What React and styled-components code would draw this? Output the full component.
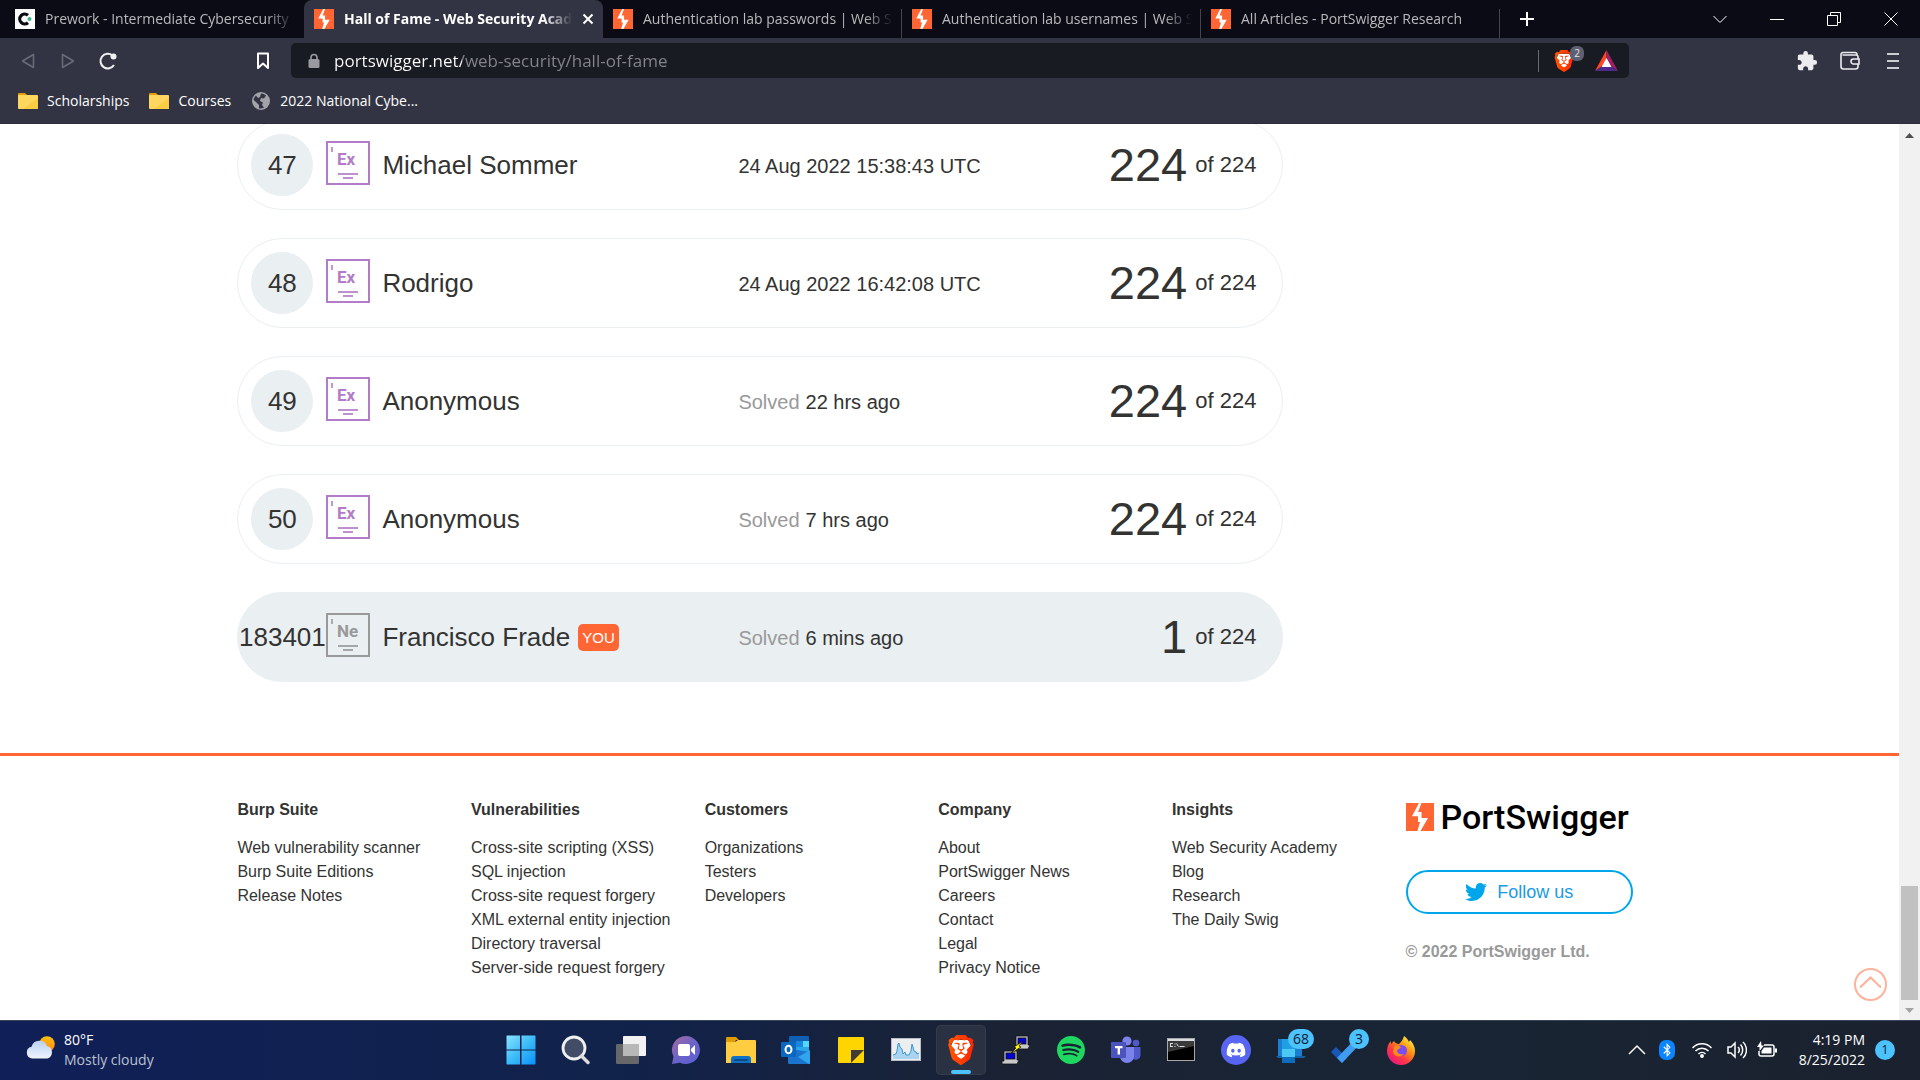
import React from "react";
import styled, { createGlobalStyle, css } from "styled-components";
import { SiBrave, SiSpotify, SiDiscord } from "react-icons/si";
import { FaTwitter, FaBluetoothB } from "react-icons/fa";
import { MdExtension } from "react-icons/md";

const uiFont = `"Open Sans", "Noto Sans", sans-serif`;
const pageFont = `"Liberation Sans", Arial, sans-serif`;

const GlobalStyle = createGlobalStyle`
  *, *::before, *::after { box-sizing: border-box; }
  html, body, #root { height: 100%; }
  body { margin: 0; background: #fff; overflow: hidden; }
  button { border: 0; padding: 0; background: none; color: inherit; font: inherit; }
  svg { display: block; flex: none; }
`;

const Desktop = styled.div`
  display: flex;
  flex-direction: column;
  height: 100%;
`;

/* ---------- browser frame ---------- */

const Chrome = styled.header`
  font: 14px/20px ${uiFont};
  color: #fff;
  background: #323443;
`;

const TabStrip = styled.div`
  display: flex;
  height: 38px;
  padding-left: 5px;
  background: #0a0b15;
`;

const Tabs = styled.div`
  display: flex;
  min-width: 0;
`;

const Tab = styled.div`
  display: flex;
  align-items: center;
  gap: 10px;
  width: 299px;
  min-width: 0;
  padding: 0 9px 0 10px;
  color: #b9b9bc;
  ${(p) =>
    p.$active
      ? css`
          color: #fff;
          font-weight: 700;
          background: #323443;
          border-radius: 8px 8px 0 0;
        `
      : p.$divider &&
        css`
          background: linear-gradient(#45454d, #45454d) right bottom / 1px 29px no-repeat;
        `}
`;

const TabTitle = styled.span`
  flex: 1;
  min-width: 0;
  overflow: hidden;
  white-space: nowrap;
  mask-image: linear-gradient(to right, #000 calc(100% - 28px), transparent);
`;

const IconButton = styled.button`
  display: flex;
  align-items: center;
  justify-content: center;
  width: ${(p) => p.$width || 20}px;
  height: ${(p) => p.$height || 20}px;
  color: ${(p) => p.$color || "#fff"};
`;

const WindowControls = styled.div`
  display: flex;
  margin-left: auto;
  padding-right: 1px;
`;

const Toolbar = styled.div`
  display: flex;
  align-items: center;
  height: 45px;
  padding: 0 17px 0 8px;
`;

const NavButtons = styled.div`
  display: flex;
  align-items: center;
  width: 236px;
`;

const AddressBar = styled.form`
  display: flex;
  align-items: center;
  flex: 0 1 1338px;
  min-width: 0;
  height: 35px;
  margin: 0 auto 0 10px;
  padding: 0 11px 0 17px;
  gap: 14px;
  background: #191b22;
  border-radius: 5px;
`;

const AddressInput = styled.input`
  flex: 1;
  min-width: 0;
  height: 28px;
  padding: 0;
  border: 0;
  outline: 0;
  font: 17px/28px ${uiFont};
  color: transparent;
  background: linear-gradient(to right, #fff 128px, #85868b 128px);
  background-clip: text;
`;

const Extensions = styled.div`
  display: flex;
  align-items: center;
  height: 22px;
  padding-left: 14px;
  gap: 22px;
  border-left: 1px solid #6a6b72;
`;

const ShieldButton = styled.button`
  position: relative;
  width: 20px;
  height: 22px;
`;

const ShieldCount = styled.span`
  position: absolute;
  top: -4px;
  right: -11px;
  width: 14px;
  border-radius: 6px;
  background: #5e6071;
  color: #e4e4e8;
  font-size: 10px;
  line-height: 15px;
  text-align: center;
`;

const ToolbarActions = styled.div`
  display: flex;
  align-items: center;
  gap: 23px;
`;

const Bookmarks = styled.nav`
  display: flex;
  align-items: center;
  gap: 20px;
  height: 41px;
  padding: 0 18px 4px;
  border-bottom: 1px solid #2a2b38;
`;

const Bookmark = styled.a`
  display: flex;
  align-items: center;
  gap: 9px;
  color: #fff;
  text-decoration: none;
`;

/* ---------- web page ---------- */

const Viewport = styled.div`
  display: flex;
  flex: 1;
  min-height: 0;
  position: relative;
  background: #fff;
`;

const Page = styled.div`
  display: flex;
  flex: 1;
  flex-direction: column;
  justify-content: flex-end;
  min-width: 0;
  overflow: hidden;
  font: 16px/24px ${pageFont};
  color: #333332;
`;

const Main = styled.main`
  padding: 0 14% 71px 12.5%;
`;

const Board = styled.table`
  display: block;
  max-width: 1046px;
`;

const BoardBody = styled.tbody`
  display: flex;
  flex-direction: column;
  gap: 28px;
`;

const Row = styled.tr`
  display: grid;
  grid-template-columns: 75px 56px 356px 1fr auto;
  align-items: center;
  height: 90px;
  padding: 0 26px 0 13px;
  border: 1px solid #eaeff1;
  border-radius: 45px;
  background: ${(p) => (p.$own ? "#eaeff2" : "#fff")};
`;

const Cell = styled.td`
  display: flex;
  align-items: center;
  padding: 0;
  white-space: nowrap;
`;

const BadgeCell = styled(Cell)`
  padding-bottom: 5px;
`;

const Rank = styled.span`
  display: flex;
  align-items: center;
  justify-content: center;
  width: 62px;
  height: 62px;
  border-radius: 50%;
  background: #eaeff2;
  font-size: 26px;
`;

const NameCell = styled(Cell)`
  gap: 8px;
  font-size: 26px;
`;

const YouTag = styled.span`
  padding: 1px 4px 0;
  border-radius: 5px;
  background: #ff6633;
  color: #fff;
  font-size: 15px;
  line-height: 26px;
`;

const TimeCell = styled(Cell)`
  gap: 6px;
  padding-top: 2px;
  font-size: 20px;
`;

const Muted = styled.span`
  color: #999;
`;

const ScoreCell = styled(Cell)`
  gap: 8px;
  font-size: 22px;
`;

const Score = styled.span`
  font-size: 47px;
  line-height: 48px;
`;

const Footer = styled.footer`
  display: grid;
  grid-template-columns: repeat(6, minmax(0, 1fr));
  gap: 6px;
  padding: 42px 14% 40px 12.5%;
  border-top: 3px solid #ff6633;
`;

const FooterHeading = styled.h2`
  margin: 0 0 14px;
  font-size: 16px;
  line-height: 24px;
`;

const FooterLinks = styled.ul`
  margin: 0;
  padding: 0;
  list-style: none;
  white-space: nowrap;
`;

const FooterLink = styled.a`
  color: #333332;
  text-decoration: none;
`;

const Company = styled.div`
  display: flex;
  flex-direction: column;
  padding-top: 5px;
`;

const Brand = styled.a`
  display: flex;
  align-items: center;
  gap: 7px;
  height: 28px;
  color: #000;
  font: 500 34px/28px Roboto, sans-serif;
  text-decoration: none;
`;

const FollowButton = styled.a`
  display: flex;
  align-items: center;
  justify-content: center;
  gap: 10px;
  height: 44px;
  margin: 39px 0 26px;
  border: 2px solid #00a6eb;
  border-radius: 22px;
  color: #1b9ae8;
  font-size: 18px;
  text-decoration: none;
`;

const Copyright = styled.small`
  color: #999;
  font-size: 16px;
  font-weight: 700;
`;

const ToTop = styled.button`
  position: absolute;
  right: 33px;
  bottom: 19px;
  width: 33px;
  height: 33px;
`;

const Scrollbar = styled.div`
  display: flex;
  flex-direction: column;
  align-items: center;
  width: 21px;
  padding: 9px 0 7px;
  background: #f1f1f1;
`;

const ScrollThumb = styled.div`
  width: 17px;
  height: 114px;
  margin: auto 0 8px;
  background: #c1c1c1;
`;

/* ---------- taskbar ---------- */

const Taskbar = styled.footer`
  display: grid;
  grid-template-columns: 1fr auto 1fr;
  align-items: center;
  height: 60px;
  padding-bottom: 2px;
  border-top: 1px solid #38465a;
  background: linear-gradient(to right, #101f57, #11224a 33%, #1a2234 52%, #182534 75%, #1b212e);
  color: #fff;
  font: 14px/20px ${uiFont};
`;

const Weather = styled.button`
  display: flex;
  align-items: center;
  gap: 9px;
  padding-left: 26px;
  text-align: left;
`;

const Lines = styled.span`
  display: flex;
  flex-direction: column;
`;

const Dim = styled.span`
  color: #bcc2d3;
`;

const Apps = styled.div`
  display: flex;
  gap: 5px;
  padding-left: 2px;
`;

const TaskButton = styled.button`
  display: flex;
  position: relative;
  align-items: center;
  justify-content: center;
  width: 50px;
  height: 50px;
  border-radius: 5px;
  ${(p) =>
    p.$active &&
    css`
      background: #293142;
      box-shadow: inset 0 0 0 1px #343c4c;
      &::after {
        content: "";
        position: absolute;
        bottom: 1px;
        width: 20px;
        height: 4px;
        border-radius: 2px;
        background: #4cc2ff;
      }
    `}
`;

const Count = styled.span`
  position: absolute;
  top: 4px;
  right: 2px;
  min-width: 20px;
  padding: 0 5px;
  border-radius: 10px;
  background: #4cc2ff;
  color: #10202c;
  font-size: 14px;
  line-height: 20px;
`;

const Tray = styled.div`
  display: flex;
  align-items: center;
  justify-content: flex-end;
  gap: 10px;
  padding-right: 25px;
`;

const Clock = styled.button`
  display: flex;
  flex-direction: column;
  margin-left: 12px;
  text-align: right;
`;

const Notice = styled.span`
  width: 20px;
  border-radius: 10px;
  background: #4cc2ff;
  color: #10202c;
  font-size: 12px;
  line-height: 20px;
  text-align: center;
`;

/* ---------- drawings ---------- */

const Bolt = ({ width = 20, height = 20 }) => (
  <svg width={width} height={height} viewBox="0 0 28 28" preserveAspectRatio="none">
    <rect width="28" height="28" fill="#ff6633" />
    <path d="M15.500 0H13L6 13.200H12V19L14 19 11.500 28H14.500L22 15H15.500V9H12Z" fill="#fff" />
  </svg>
);

const SchoolMark = () => (
  <svg width="20" height="20" viewBox="0 0 20 20">
    <rect width="20" height="20" fill="#fff" />
    <path d="M13 6.200A5 5 0 1 0 13 13.800" fill="none" stroke="#0b0b12" strokeWidth="3.200" />
    <circle cx="14.500" cy="10" r="2" fill="#3cb98a" />
  </svg>
);

const Stroke = ({ size = 16, width = 1.5, d, fill = "none" }) => (
  <svg width={size} height={size} viewBox={`0 0 ${size} ${size}`}>
    <path d={d} fill={fill} stroke="currentColor" strokeWidth={width} strokeLinejoin="round" />
  </svg>
);

const Reload = () => (
  <svg width="20" height="20" viewBox="0 0 20 20">
    <path d="M14.500 4.500A7.300 7.300 0 1 0 16 14" fill="none" stroke="#f0f0f2" strokeWidth="2" />
    <circle cx="15.500" cy="5.500" r="3" fill="#f0f0f2" />
  </svg>
);

const Lock = () => (
  <svg width="12" height="16" viewBox="0 0 12 16">
    <path d="M3 7V4.500a3 3 0 0 1 6 0V7" fill="none" stroke="#9a9ba1" strokeWidth="1.600" />
    <rect x="0.500" y="6" width="11" height="9" rx="1.500" fill="#9a9ba1" />
  </svg>
);

const Lion = ({ size, id }) => (
  <svg width={size} height={size} viewBox="0 0 24 24">
    <defs>
      <linearGradient id={id}>
        <stop offset="0" stopColor="#ff5601" />
        <stop offset="0.500" stopColor="#ff4000" />
        <stop offset="1" stopColor="#ff2000" />
      </linearGradient>
    </defs>
    <path d="M6 4h12l2 5-2 9-6 4.500L6 18 4 9Z" fill="#fff" />
    <SiBrave size={24} style={{ fill: `url(#${id})` }} />
  </svg>
);

const BatTriangle = () => (
  <svg width="23" height="21" viewBox="0 0 23 21">
    <path d="M11.500 0 0 21 11.500 13Z" fill="#ff4724" />
    <path d="M11.500 0 23 21 11.500 13Z" fill="#9e1f63" />
    <path d="M0 21H23L11.500 13Z" fill="#4d2a8c" />
    <path d="M11.500 8 6.500 17H16.500Z" fill="#fff" />
  </svg>
);

const Wallet = () => (
  <svg width="20" height="20" viewBox="0 0 20 20" fill="none" stroke="#ececef" strokeWidth="1.600">
    <path d="M18 8V6a2 2 0 0 0-2-2H2.500M18 13v2.500a2.500 2.500 0 0 1-2.500 2.500h-12A2.500 2.500 0 0 1 1 15.500v-12A2 2 0 0 1 3 1.500h12A2 2 0 0 1 17 4" />
    <path d="M19 8h-5.500a2.500 2.500 0 0 0 0 5H19Z" />
  </svg>
);

const Folder = () => (
  <svg width="20" height="18" viewBox="0 0 20 18">
    <path d="M0 2a1 1 0 0 1 1-1h6l2 2h9v4H0Z" fill="#dfa000" />
    <rect y="3" width="20" height="14" rx="1" fill="#ffd75e" />
    <path d="M20 6v10a1 1 0 0 1-1 1H5Z" fill="#fbcd43" />
  </svg>
);

const Globe = () => (
  <svg width="20" height="18" viewBox="-1 0 20 18">
    <circle cx="9" cy="9" r="9" fill="#a2a4aa" />
    <path d="M9 1.500a7.500 7.500 0 0 1 5 2l-2 3-3-.5-1 3 3 1.500-1 2.500 2 2.500a7.500 7.500 0 0 1-5 .900v-3.400L4 10 1.600 8A7.500 7.500 0 0 1 4 3.500L6 6l2-1Z" fill="#323443" />
  </svg>
);

const LevelBadge = ({ text, color }) => (
  <svg width="44" height="44" viewBox="0 0 44 44">
    <rect x="1" y="1" width="42" height="42" fill="none" stroke={color} strokeWidth="2" />
    <g fill={color}>
      <rect x="5" y="6" width="2" height="5" opacity="0.800" />
      <rect x="12" y="32" width="20" height="2" opacity="0.850" />
      <rect x="17" y="36" width="10" height="2" opacity="0.850" />
      <text x="11" y="24" fontFamily="Roboto, sans-serif" fontWeight="700" fontSize="17">
        {text}
      </text>
    </g>
  </svg>
);

const UpCircle = () => (
  <svg width="33" height="33" viewBox="0 0 33 33" fill="none" stroke="#ffb299" strokeWidth="2">
    <circle cx="16.500" cy="16.500" r="15.500" />
    <path d="M6 19.500 16.500 9.500 27 19.500" />
  </svg>
);

const Arrow = ({ down }) => (
  <svg width="9" height="5" viewBox="0 0 9 5">
    <path d={down ? "M0 0H9L4.500 5Z" : "M0 5H9L4.500 0Z"} fill={down ? "#a3a3a3" : "#505050"} />
  </svg>
);

const WeatherIcon = () => (
  <svg width="29" height="27" viewBox="0 0 29 27">
    <defs>
      <linearGradient id="cloud" x1="0" y1="0" x2="0" y2="1">
        <stop offset="0" stopColor="#b9d0f4" />
        <stop offset="1" stopColor="#f0f5fd" />
      </linearGradient>
      <linearGradient id="sun" x1="0" y1="0" x2="0" y2="1">
        <stop offset="0" stopColor="#ffc20e" />
        <stop offset="1" stopColor="#ff8412" />
      </linearGradient>
    </defs>
    <circle cx="21" cy="8" r="7.800" fill="url(#sun)" />
    <path d="M6 22.500a6 6 0 0 1-.5-11.800A8.200 8.200 0 0 1 21 10 6.500 6.500 0 0 1 21.500 22.500Z" fill="url(#cloud)" />
  </svg>
);

const icons = {
  start: (
    <svg width="30" height="30" viewBox="0 0 30 30">
      <defs>
        <linearGradient id="win" x1="0" y1="0" x2="1" y2="1">
          <stop offset="0" stopColor="#8be4ff" />
          <stop offset="0.500" stopColor="#3cbcf8" />
          <stop offset="1" stopColor="#0a90f8" />
        </linearGradient>
      </defs>
      <path d="M1 .5h13v14H.5V1ZM15.500.5H29l.5.5v13.500h-14ZM.5 15.500H14v14H1l-.5-.5ZM15.500 15.500h14V29l-.5.500H15.500Z" fill="url(#win)" />
    </svg>
  ),
  search: (
    <svg width="30" height="30" viewBox="0 0 30 30">
      <circle cx="13" cy="13" r="11" fill="#414d66" stroke="#f0f0f0" strokeWidth="2.800" />
      <path d="m20.500 21 6.500 6.500" stroke="#dcdcdf" strokeWidth="3.500" strokeLinecap="round" />
    </svg>
  ),
  tasks: (
    <svg width="30" height="30" viewBox="0 0 30 30">
      <rect y="9" width="23" height="20" rx="1" fill="#666769" />
      <rect x="7" y="1" width="23" height="20" rx="1" fill="#f1f1f1" />
      <rect x="7" y="9" width="16" height="12" fill="#b8b8b8" />
    </svg>
  ),
  chat: (
    <svg width="30" height="30" viewBox="0 0 30 30">
      <defs>
        <linearGradient id="chat" x1="0" y1="0" x2="1" y2="1">
          <stop offset="0" stopColor="#a86a9e" />
          <stop offset="0.500" stopColor="#6b63c8" />
          <stop offset="1" stopColor="#5b5fd6" />
        </linearGradient>
      </defs>
      <path d="M15 1a14 14 0 1 1-6 26.700L1 29l1.500-7.500A14 14 0 0 1 15 1Z" fill="url(#chat)" />
      <rect x="7" y="9" width="12" height="12" rx="2" fill="#fff" />
      <path d="m20 14 4-4v10l-4-4Z" fill="#fff" />
    </svg>
  ),
  files: (
    <svg width="30" height="28" viewBox="0 0 30 28">
      <path d="M0 2a1 1 0 0 1 1-1h9l3 3h-3L8 8H0Z" fill="#e09c05" />
      <path d="M0 6h9l3-2h17a1 1 0 0 1 1 1v22H0Z" fill="#ffcd3f" />
      <path d="M5 27v-4a3 3 0 0 1 3-3h14a3 3 0 0 1 3 3v4Z" fill="#0f72c4" />
      <path d="M9 24h12" stroke="#0a4a8c" strokeWidth="2" strokeLinecap="round" />
    </svg>
  ),
  outlook: (
    <svg width="30" height="28" viewBox="0 0 30 28">
      <rect x="8" width="20" height="16" rx="1" fill="#0f5fb5" />
      <path d="M15 5h7v6h-7Z" fill="#1a86dc" />
      <path d="M22 5h6v6h-6Z" fill="#50d9ff" />
      <path d="M15 11h7v5h-7ZM22 11h6v6h-6Z" fill="#28a8ea" />
      <path d="M7 13h3l19 3v11a1 1 0 0 1-1 1H8a1 1 0 0 1-1-1Z" fill="#1a74ce" />
      <path d="m29 14-12 7 11 7h1Z" fill="#30a4ec" />
      <rect y="6" width="15" height="15" rx="1" fill="#0a68c0" />
      <ellipse cx="7.500" cy="13.500" rx="3" ry="3.700" fill="none" stroke="#fff" strokeWidth="2" />
    </svg>
  ),
  notes: (
    <svg width="26" height="26" viewBox="0 0 26 26">
      <path d="M1 0h24a1 1 0 0 1 1 1v24a1 1 0 0 1-1 1H1a1 1 0 0 1-1-1V1a1 1 0 0 1 1-1Z" fill="#ffd500" />
      <path d="M13 13h13L13 26Z" fill="#403b36" />
    </svg>
  ),
  monitor: (
    <svg width="30" height="23" viewBox="0 0 30 23">
      <rect x="0.500" y="0.500" width="29" height="22" fill="#eceef0" stroke="#b7bdc4" />
      <path d="M2 17 5 16 6 13 7 6 8 5 9 9 11 11 12 16 14 14 15 17 18 17 20 13 21 6 22 9 23 13 25 14 26 16 28 15V21H2Z" fill="#a9d3ef" />
      <path d="M2 17 5 16 6 13 7 6 8 5 9 9 11 11 12 16 14 14 15 17 18 17 20 13 21 6 22 9 23 13 25 14 26 16 28 15" fill="none" stroke="#3b98d8" />
    </svg>
  ),
  brave: <Lion size={30} id="lionTask" />,
  putty: (
    <svg width="30" height="30" viewBox="0 0 30 30">
      <g stroke="#111" strokeWidth="0.800">
        <path d="M15 1h12v9h2l-2 4H14v-3h1Z" fill="#c9c9c9" />
        <path d="M3 16h13v9h2l-2 4H1v-3h2Z" fill="#c9c9c9" />
        <rect x="17" y="3" width="8" height="6" fill="#0000d8" />
        <rect x="5" y="18" width="9" height="6" fill="#0000d8" />
        <path d="m22 6-9 6 2 1-6 6 11-7-2-1Z" fill="#ff0" />
      </g>
    </svg>
  ),
  spotify: <SiSpotify size={28} color="#1ed760" />,
  teams: (
    <svg width="30" height="28" viewBox="0 0 30 28">
      <circle cx="25" cy="7" r="3.300" fill="#5059c9" />
      <path d="M20 11h9.500v8a5 5 0 0 1-9.500 2Z" fill="#5059c9" />
      <circle cx="16" cy="5" r="4.600" fill="#7b83eb" />
      <path d="M9 11h14v9a7 7 0 0 1-14 0Z" fill="#7b83eb" />
      <rect y="6" width="15" height="16" rx="1" fill="#4b53bc" />
      <path d="M4 10h7.500v2.200H9V18.500H6.600V12.200H4Z" fill="#fff" />
    </svg>
  ),
  terminal: (
    <svg width="28" height="23" viewBox="0 0 28 23">
      <rect x="0.500" y="0.500" width="27" height="22" fill="#000" stroke="#a8a8a8" />
      <path d="M1 3h26v5L1 14Z" fill="#3a3a3a" />
      <path d="M1 1h26v2H1Z" fill="#d8dde2" />
      <path d="M3 5.500h3M3 8.500h3M3.500 5v3M8 5.500v1M8 8v1M9.500 5.500l2 3M12.500 8.500h5" stroke="#ddd" fill="none" />
    </svg>
  ),
  discord: (
    <svg width="30" height="30" viewBox="0 0 30 30">
      <circle cx="15" cy="15" r="15" fill="#5865f2" />
      <svg x="5.500" y="5.500" width="19" height="19" viewBox="0 0 24 24">
        <SiDiscord size={24} color="#fff" />
      </svg>
    </svg>
  ),
  phone: (
    <svg width="30" height="28" viewBox="0 0 30 28">
      <path d="M2 3h24v17H2Z" fill="#1a7fd0" />
      <path d="M0 20h30l-2 2H2Z" fill="#1160a8" />
      <path d="M6 3h13v24H6Z" fill="#4cc8f4" />
      <path d="M6 3h13v10H6Z" fill="#1f9fe4" />
      <path d="M6 21h13v6H6Z" fill="#0c6cbe" />
    </svg>
  ),
  todo: (
    <svg width="30" height="28" viewBox="0 0 30 28">
      <path d="m0 16 5-5 11 11-5 5Z" fill="#1a58b8" />
      <path d="M6 22 24 3l5 5-18 19Z" fill="#3f9cf0" />
    </svg>
  ),
  firefox: (
    <svg width="30" height="30" viewBox="0 0 30 30">
      <defs>
        <linearGradient id="fox" x1="1" y1="0" x2="0.200" y2="1">
          <stop offset="0.100" stopColor="#fff44f" />
          <stop offset="0.400" stopColor="#ff980e" />
          <stop offset="0.700" stopColor="#ff3647" />
          <stop offset="1" stopColor="#e31587" />
        </linearGradient>
      </defs>
      <path d="M18 1c3 2 4 4 5 6l1-2c4 4 5 8 5 11a14 14 0 0 1-28 0c0-4 1-7 4-10v3l3-3c1 2 3 3 5 3 2-2 4-4 5-8Z" fill="url(#fox)" />
      <circle cx="15.500" cy="15.500" r="5.500" fill="#7a4df0" />
      <path d="M8 12c2-2 5-1 7 0-1 2-3 2-4 3 0 4 4 5 7 4-3 4-10 3-11-2Z" fill="#ff8a1c" />
    </svg>
  ),
};

const tray = {
  more: <Stroke size={18} d="M1 13 9 5 17 13" />,
  wifi: (
    <svg width="20" height="16" viewBox="0 0 20 16" fill="none" stroke="#fff" strokeWidth="1.500">
      <path d="M.5 6a13 13 0 0 1 19 0M3.500 9a9 9 0 0 1 13 0M6.500 12a5 5 0 0 1 7 0" />
      <circle cx="10" cy="14" r="1.200" fill="#fff" />
    </svg>
  ),
  sound: (
    <svg width="20" height="18" viewBox="0 0 20 18" fill="none" stroke="#fff" strokeWidth="1.500">
      <path d="M1 6h3l4-4v14l-4-4H1ZM11 6a4 4 0 0 1 0 6M13.500 3.500a8 8 0 0 1 0 11M16 1a11 11 0 0 1 0 16" />
    </svg>
  ),
  battery: (
    <svg width="20" height="18" viewBox="0 0 20 18">
      <path d="M7 4h8a2 2 0 0 1 2 2v7a2 2 0 0 1-2 2H4a2 2 0 0 1-2-2v-3" fill="none" stroke="#fff" strokeWidth="1.500" />
      <path d="M7 6.500h7.500v6H4.500V10Z" fill="#fff" />
      <path d="M18 7.500h2v4h-2ZM4 0 0 6h2.500v4L7 4.500H4.500Z" fill="#fff" />
    </svg>
  ),
};

/* ---------- content ---------- */

const tabs = [
  { title: "Prework - Intermediate Cybersecurity |", school: true },
  { title: "Hall of Fame - Web Security Acad", active: true },
  { title: "Authentication lab passwords | Web Se", divider: true },
  { title: "Authentication lab usernames | Web Se", divider: true },
  { title: "All Articles - PortSwigger Research", divider: true },
];

const players = [
  { rank: 47, name: "Michael Sommer", time: "24 Aug 2022 15:38:43 UTC", score: 224 },
  { rank: 48, name: "Rodrigo", time: "24 Aug 2022 16:42:08 UTC", score: 224 },
  { rank: 49, name: "Anonymous", ago: true, time: "22 hrs ago", score: 224 },
  { rank: 50, name: "Anonymous", ago: true, time: "7 hrs ago", score: 224 },
  { rank: 183401, name: "Francisco Frade", ago: true, time: "6 mins ago", score: 1, own: true },
];

const footer = [
  ["Burp Suite", ["Web vulnerability scanner", "Burp Suite Editions", "Release Notes"]],
  [
    "Vulnerabilities",
    [
      "Cross-site scripting (XSS)",
      "SQL injection",
      "Cross-site request forgery",
      "XML external entity injection",
      "Directory traversal",
      "Server-side request forgery",
    ],
  ],
  ["Customers", ["Organizations", "Testers", "Developers"]],
  ["Company", ["About", "PortSwigger News", "Careers", "Contact", "Legal", "Privacy Notice"]],
  ["Insights", ["Web Security Academy", "Blog", "Research", "The Daily Swig"]],
];

const apps = [
  ["start", "Start"],
  ["search", "Search"],
  ["tasks", "Task View"],
  ["chat", "Chat"],
  ["files", "File Explorer"],
  ["outlook", "Outlook"],
  ["notes", "Sticky Notes"],
  ["monitor", "Monitor"],
  ["brave", "Brave"],
  ["putty", "PuTTY"],
  ["spotify", "Spotify"],
  ["teams", "Teams"],
  ["terminal", "Command Prompt"],
  ["discord", "Discord"],
  ["phone", "Phone Link", 68],
  ["todo", "To Do", 3],
  ["firefox", "Firefox"],
];

function BrowserChrome() {
  return (
    <Chrome>
      <TabStrip>
        <Tabs>
          {tabs.map((t) => (
            <Tab key={t.title} $active={t.active} $divider={t.divider}>
              {t.school ? <SchoolMark /> : <Bolt />}
              <TabTitle>{t.title}</TabTitle>
              {t.active && (
                <IconButton aria-label="Close tab" $width={12}>
                  <Stroke size={12} width={2} d="M1.500 1.500 10.500 10.500M10.500 1.500 1.500 10.500" />
                </IconButton>
              )}
            </Tab>
          ))}
        </Tabs>
        <IconButton aria-label="New tab" $width={54} $height={38}>
          <Stroke size={16} width={2} d="M8 1V15M1 8H15" />
        </IconButton>
        <WindowControls>
          <IconButton aria-label="Search tabs" $width={57} $height={38}>
            <Stroke size={14} width={1} d="M.5 4 7 10.500 13.500 4" />
          </IconButton>
          <IconButton aria-label="Minimize" $width={57} $height={38}>
            <Stroke size={14} width={1} d="M0 7.500H14" />
          </IconButton>
          <IconButton aria-label="Restore" $width={57} $height={38}>
            <Stroke size={14} width={1} d="M.5 3.500h10v10H.5ZM3.500 3.500V.5h10v10h-3" />
          </IconButton>
          <IconButton aria-label="Close" $width={57} $height={38}>
            <Stroke size={14} width={1} d="M.5.5 13.500 13.500M13.500.5.5 13.500" />
          </IconButton>
        </WindowControls>
      </TabStrip>
      <Toolbar>
        <NavButtons>
          <IconButton aria-label="Back" $width={40} $color="#696b76">
            <Stroke size={16} width={1.5} d="M13.500 1.500V14.500L2.500 8Z" />
          </IconButton>
          <IconButton aria-label="Forward" $width={40} $color="#696b76">
            <Stroke size={16} width={1.5} d="M2.500 1.500V14.500L13.500 8Z" />
          </IconButton>
          <IconButton aria-label="Reload" $width={40}>
            <Reload />
          </IconButton>
        </NavButtons>
        <IconButton aria-label="Bookmark this page" $width={37}>
          <Stroke size={18} width={2} d="M4 1.500h10V16l-5-4.500-5 4.500Z" />
        </IconButton>
        <AddressBar>
          <Lock />
          <AddressInput aria-label="Address" defaultValue="portswigger.net/web-security/hall-of-fame" />
          <Extensions>
            <ShieldButton type="button" aria-label="Shields">
              <Lion size={22} id="lionBar" />
              <ShieldCount>2</ShieldCount>
            </ShieldButton>
            <IconButton type="button" aria-label="Rewards" $width={23}>
              <BatTriangle />
            </IconButton>
          </Extensions>
        </AddressBar>
        <ToolbarActions>
          <IconButton aria-label="Extensions" $color="#ececef">
            <MdExtension size={22} />
          </IconButton>
          <IconButton aria-label="Wallet">
            <Wallet />
          </IconButton>
          <IconButton aria-label="Menu">
            <Stroke size={18} width={1.5} d="M3 2H15M3 9H15M3 16H15" />
          </IconButton>
        </ToolbarActions>
      </Toolbar>
      <Bookmarks>
        <Bookmark href="#">
          <Folder />
          Scholarships
        </Bookmark>
        <Bookmark href="#">
          <Folder />
          Courses
        </Bookmark>
        <Bookmark href="#">
          <Globe />
          2022 National Cybe...
        </Bookmark>
      </Bookmarks>
    </Chrome>
  );
}

function HallOfFame() {
  return (
    <Board>
      <BoardBody>
        {players.map((p) => (
          <Row key={p.rank} $own={p.own}>
            <Cell>
              <Rank>{p.rank}</Rank>
            </Cell>
            <BadgeCell>
              <LevelBadge text={p.own ? "Ne" : "Ex"} color={p.own ? "#999" : "#b27cc8"} />
            </BadgeCell>
            <NameCell>
              {p.name}
              {p.own && <YouTag>YOU</YouTag>}
            </NameCell>
            <TimeCell>
              {p.ago && <Muted>Solved</Muted>}
              {p.time}
            </TimeCell>
            <ScoreCell>
              <Score>{p.score}</Score>
              <span>of 224</span>
            </ScoreCell>
          </Row>
        ))}
      </BoardBody>
    </Board>
  );
}

function SiteFooter() {
  return (
    <Footer>
      {footer.map(([heading, links]) => (
        <section key={heading}>
          <FooterHeading>{heading}</FooterHeading>
          <FooterLinks>
            {links.map((l) => (
              <li key={l}>
                <FooterLink href="#">{l}</FooterLink>
              </li>
            ))}
          </FooterLinks>
        </section>
      ))}
      <Company>
        <Brand href="#">
          <Bolt width={28} height={28} />
          PortSwigger
        </Brand>
        <FollowButton href="#">
          <FaTwitter size={22} color="#00a6eb" />
          Follow us
        </FollowButton>
        <Copyright>© 2022 PortSwigger Ltd.</Copyright>
      </Company>
    </Footer>
  );
}

function SystemBar() {
  return (
    <Taskbar>
      <Weather>
        <WeatherIcon />
        <Lines>
          <span>80°F</span>
          <Dim>Mostly cloudy</Dim>
        </Lines>
      </Weather>
      <Apps>
        {apps.map(([key, label, count]) => (
          <TaskButton key={key} aria-label={label} $active={key === "brave"}>
            {icons[key]}
            {count && <Count>{count}</Count>}
          </TaskButton>
        ))}
      </Apps>
      <Tray>
        <IconButton aria-label="Hidden icons">{tray.more}</IconButton>
        <IconButton aria-label="Bluetooth">
          <svg width="16" height="20" viewBox="0 0 16 20">
            <rect width="16" height="20" rx="7" fill="#0a84ff" />
            <svg x="1" y="3" width="14" height="14" viewBox="0 0 14 14">
              <FaBluetoothB size={14} />
            </svg>
          </svg>
        </IconButton>
        <IconButton aria-label="Wi-Fi" $width={30}>
          {tray.wifi}
        </IconButton>
        <IconButton aria-label="Volume">{tray.sound}</IconButton>
        <IconButton aria-label="Battery">{tray.battery}</IconButton>
        <Clock>
          <span>4:19 PM</span>
          <span>8/25/2022</span>
        </Clock>
        <Notice>1</Notice>
      </Tray>
    </Taskbar>
  );
}

export default function App() {
  return (
    <Desktop>
      <GlobalStyle />
      <BrowserChrome />
      <Viewport>
        <Page>
          <Main>
            <HallOfFame />
          </Main>
          <SiteFooter />
        </Page>
        <Scrollbar>
          <Arrow />
          <ScrollThumb />
          <Arrow down />
        </Scrollbar>
        <ToTop aria-label="Back to top">
          <UpCircle />
        </ToTop>
      </Viewport>
      <SystemBar />
    </Desktop>
  );
}
